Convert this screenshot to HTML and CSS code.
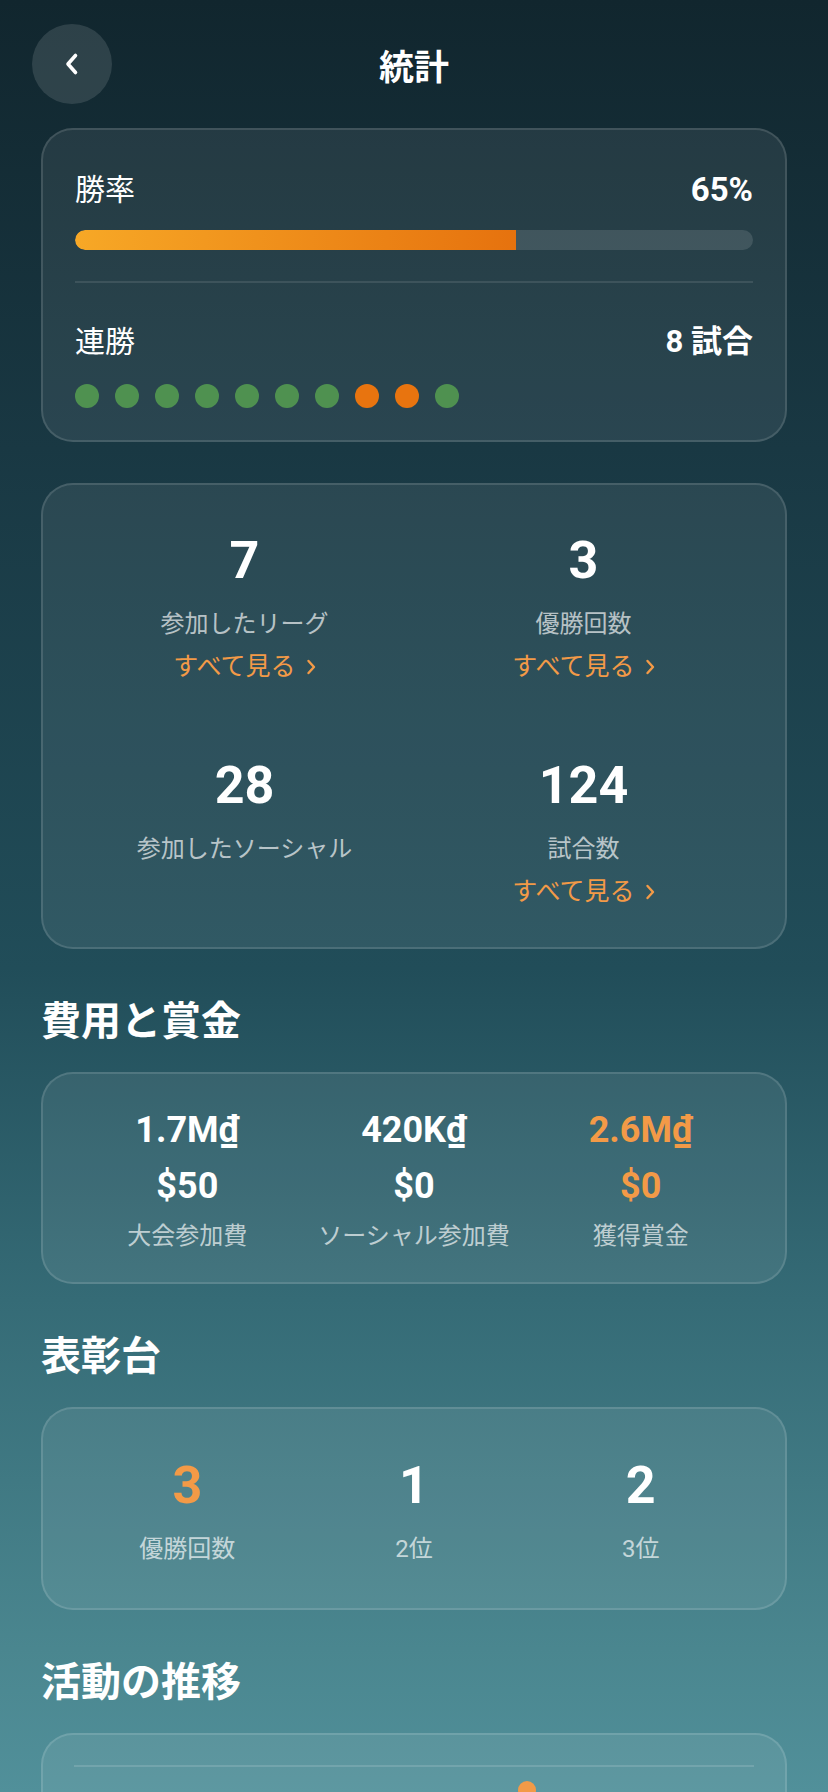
FILE: index.html
```html
<!DOCTYPE html>
<html lang="ja">

<head>
    <meta charset="utf-8" />
    <title>統計</title>
    <link rel="stylesheet" href="styles.css">
</head>

<body>
    <div class="screen">
        <header class="top-bar">
            <button class="back-btn" aria-label="戻る">
                <svg width="24" height="24" viewBox="0 0 24 24"><path d="M15.5 3.5 L8 12 L15.5 20.5" fill="none" stroke="#fff" stroke-width="3.6" stroke-linecap="round" stroke-linejoin="round"/></svg>
            </button>
            <h1 class="page-title">統計</h1>
            <span class="top-bar-spacer"></span>
        </header>

        <main class="content">
            <section class="card win-card">
                <div class="stat-row">
                    <span class="stat-label">勝率</span>
                    <span class="stat-value">65%</span>
                </div>
                <div class="progress"><div class="progress-fill" style="width: 65%"></div></div>
                <div class="divider"></div>
                <div class="stat-row streak-row">
                    <span class="stat-label">連勝</span>
                    <span class="stat-value small">8 試合</span>
                </div>
                <div class="streak-dots">
                    <span class="dot win"></span>
                    <span class="dot win"></span>
                    <span class="dot win"></span>
                    <span class="dot win"></span>
                    <span class="dot win"></span>
                    <span class="dot win"></span>
                    <span class="dot win"></span>
                    <span class="dot loss"></span>
                    <span class="dot loss"></span>
                    <span class="dot win"></span>
                </div>
            </section>

            <section class="card overview-card">
                <div class="overview-item">
                    <div class="big-num">7</div>
                    <div class="item-label">参加したリーグ</div>
                    <a class="see-all" href="#">すべて見る<svg width="10" height="16" viewBox="0 0 10 16"><path d="M2.5 2 L8 8 L2.5 14" fill="none" stroke="currentColor" stroke-width="2.4" stroke-linecap="round" stroke-linejoin="round"/></svg></a>
                </div>
                <div class="overview-item">
                    <div class="big-num">3</div>
                    <div class="item-label">優勝回数</div>
                    <a class="see-all" href="#">すべて見る<svg width="10" height="16" viewBox="0 0 10 16"><path d="M2.5 2 L8 8 L2.5 14" fill="none" stroke="currentColor" stroke-width="2.4" stroke-linecap="round" stroke-linejoin="round"/></svg></a>
                </div>
                <div class="overview-item">
                    <div class="big-num">28</div>
                    <div class="item-label">参加したソーシャル</div>
                </div>
                <div class="overview-item">
                    <div class="big-num">124</div>
                    <div class="item-label">試合数</div>
                    <a class="see-all" href="#">すべて見る<svg width="10" height="16" viewBox="0 0 10 16"><path d="M2.5 2 L8 8 L2.5 14" fill="none" stroke="currentColor" stroke-width="2.4" stroke-linecap="round" stroke-linejoin="round"/></svg></a>
                </div>
            </section>

            <h2 class="section-title">費用と賞金</h2>
            <section class="card three-col money-card">
                <div class="col-item">
                    <div class="money-value">1.7M₫</div>
                    <div class="money-value">$50</div>
                    <div class="item-label">大会参加費</div>
                </div>
                <div class="col-item">
                    <div class="money-value">420K₫</div>
                    <div class="money-value">$0</div>
                    <div class="item-label">ソーシャル参加費</div>
                </div>
                <div class="col-item highlight">
                    <div class="money-value">2.6M₫</div>
                    <div class="money-value">$0</div>
                    <div class="item-label">獲得賞金</div>
                </div>
            </section>

            <h2 class="section-title">表彰台</h2>
            <section class="card three-col podium-card">
                <div class="col-item highlight">
                    <div class="big-num">3</div>
                    <div class="item-label">優勝回数</div>
                </div>
                <div class="col-item">
                    <div class="big-num">1</div>
                    <div class="item-label">2位</div>
                </div>
                <div class="col-item">
                    <div class="big-num">2</div>
                    <div class="item-label">3位</div>
                </div>
            </section>

            <h2 class="section-title">活動の推移</h2>
            <section class="card chart-card">
                <svg class="chart" width="680" height="260" viewBox="0 0 680 260">
                    <line x1="0" y1="1" x2="680" y2="1" stroke="rgba(255,255,255,0.14)" stroke-width="2"/>
                    <line x1="0" y1="81" x2="680" y2="81" stroke="rgba(255,255,255,0.14)" stroke-width="2"/>
                    <line x1="0" y1="161" x2="680" y2="161" stroke="rgba(255,255,255,0.14)" stroke-width="2"/>
                    <line x1="0" y1="241" x2="680" y2="241" stroke="rgba(255,255,255,0.14)" stroke-width="2"/>
                    <polyline points="20,180 110,150 200,165 290,110 375,90 453,25 540,70 630,60" fill="none" stroke="#f39a47" stroke-width="4" stroke-linejoin="round"/>
                    <circle cx="453" cy="25" r="9" fill="#f39a47"/>
                </svg>
            </section>
        </main>
    </div>
</body>

</html>
```

FILE: styles.css
```css
* {
    box-sizing: border-box;
}

body {
    margin: 0;
    font-family: Roboto, "Noto Sans CJK JP", sans-serif;
    color: #fff;
}

.screen {
    width: 828px;
    height: 1792px;
    overflow: hidden;
    background: linear-gradient(180deg, #11262e 0%, #193843 25%, #214d59 54%, #356b76 72.5%, #4a868f 92%, #51909a 100%);
}

/* header */
.top-bar {
    display: grid;
    grid-template-columns: 80px 1fr 80px;
    align-items: center;
    padding: 24px 32px 0;
}

.back-btn {
    width: 80px;
    height: 80px;
    border-radius: 50%;
    border: none;
    background-color: rgba(255, 255, 255, 0.12);
    display: flex;
    align-items: center;
    justify-content: center;
    padding: 0;
    cursor: pointer;
}

.page-title {
    margin: 10px 0 0;
    text-align: center;
    font-size: 35px;
    font-weight: 700;
    line-height: 40px;
}

.content {
    padding: 24px 41px 0;
}

.card {
    border-radius: 32px;
    border: 2px solid rgba(255, 255, 255, 0.13);
    background-color: rgba(255, 255, 255, 0.075);
}

/* win rate card */
.win-card {
    padding: 40px 32px 32px;
}

.stat-row {
    display: flex;
    justify-content: space-between;
    align-items: center;
    height: 40px;
}

.stat-label {
    font-size: 30px;
    line-height: 40px;
}

.stat-value {
    font-size: 33px;
    font-weight: 700;
    line-height: 40px;
}

.stat-value.small {
    font-size: 31px;
}

.progress {
    margin-top: 20px;
    height: 20px;
    border-radius: 10px;
    background-color: rgba(255, 255, 255, 0.12);
    overflow: hidden;
}

.progress-fill {
    height: 100%;
    border-radius: 10px 0 0 10px;
    background: linear-gradient(90deg, #f7a826, #e6720e);
}

.divider {
    margin-top: 31px;
    height: 2px;
    background-color: rgba(255, 255, 255, 0.1);
}

.streak-row {
    margin-top: 39px;
}

.streak-dots {
    display: flex;
    gap: 16px;
    margin-top: 22px;
}

.dot {
    width: 24px;
    height: 24px;
    border-radius: 50%;
}

.dot.win {
    background-color: #4f9150;
}

.dot.loss {
    background-color: #e8740f;
}

/* overview grid */
.overview-card {
    margin-top: 41px;
    padding: 50px 32px 41px;
    display: grid;
    grid-template-columns: 1fr 1fr;
    row-gap: 79px;
}

.overview-item,
.col-item {
    display: flex;
    flex-direction: column;
    align-items: center;
}

.big-num {
    font-size: 52px;
    font-weight: 700;
    line-height: 52px;
}

.item-label {
    margin-top: 23px;
    font-size: 24px;
    line-height: 29px;
    color: rgba(255, 255, 255, 0.68);
    white-space: nowrap;
}

.see-all {
    margin-top: 13px;
    display: inline-flex;
    align-items: center;
    gap: 10px;
    font-size: 25px;
    line-height: 29px;
    color: #f39a47;
    text-decoration: none;
}

.section-title {
    margin: 49px 0 26px;
    font-size: 40px;
    font-weight: 700;
    line-height: 48px;
}

.three-col {
    display: grid;
    grid-template-columns: repeat(3, 1fr);
}

/* costs */
.money-card {
    padding: 28px 31px 31px;
}

.money-value {
    font-size: 36px;
    font-weight: 700;
    line-height: 56px;
}

.money-card .item-label {
    margin-top: 8px;
}

.highlight .money-value,
.highlight .big-num {
    color: #f39a47;
}

/* podium */
.podium-card {
    padding: 51px 31px 44px;
}

/* activity chart */
.chart-card {
    padding: 30px 31px;
}

.chart {
    display: block;
}
```
